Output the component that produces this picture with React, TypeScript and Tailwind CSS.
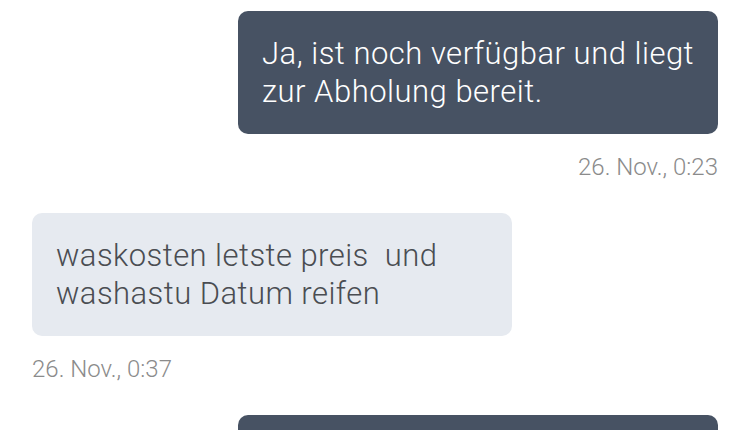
import React from 'react';

interface Message {
  lines: string[];
  time: string;
  mine: boolean;
}

const messages: Message[] = [
  { lines: ['Ja, ist noch verfügbar und liegt', 'zur Abholung bereit.'], time: '26. Nov., 0:23', mine: true },
  { lines: ['waskosten letste preis\u00a0 und', 'washastu Datum reifen'], time: '26. Nov., 0:37', mine: false },
];

export default function App() {
  return (
    <div
      className="w-[750px] h-[430px] overflow-hidden bg-white px-8 pt-[11px] flex flex-col"
      style={{ fontFamily: '"Roboto Light", Roboto, "Noto Sans", sans-serif' }}
    >
      {messages.map((m, i) => (
        <div key={i} className={`flex flex-col ${m.mine ? 'items-end' : 'items-start'} mb-[32px]`}>
          {/* Bubble */}
          <div
            className={
              m.mine
                ? 'w-[480px] rounded-[10px] bg-[#475263] text-white px-6 pt-[24px] pb-[23px] text-[31px] leading-[38px] tracking-[0.5px] font-light whitespace-nowrap'
                : 'w-[480px] rounded-[10px] bg-[#e6eaf0] text-[#4a4d52] px-6 pt-[24px] pb-[23px] text-[31px] leading-[38px] tracking-[0.45px] font-light whitespace-nowrap'
            }
          >
            {m.lines.map((l, j) => (
              <div key={j}>{l}</div>
            ))}
          </div>

          {/* Time */}
          <p className="mt-[19px] text-[24px] leading-[28px] font-light text-[#8b8b8b]">{m.time}</p>
        </div>
      ))}

      {/* next outgoing bubble, cut off by the viewport */}
      <div className="self-end w-[480px] h-[123px] shrink-0 rounded-[10px] bg-[#475263]" />
    </div>
  );
}
